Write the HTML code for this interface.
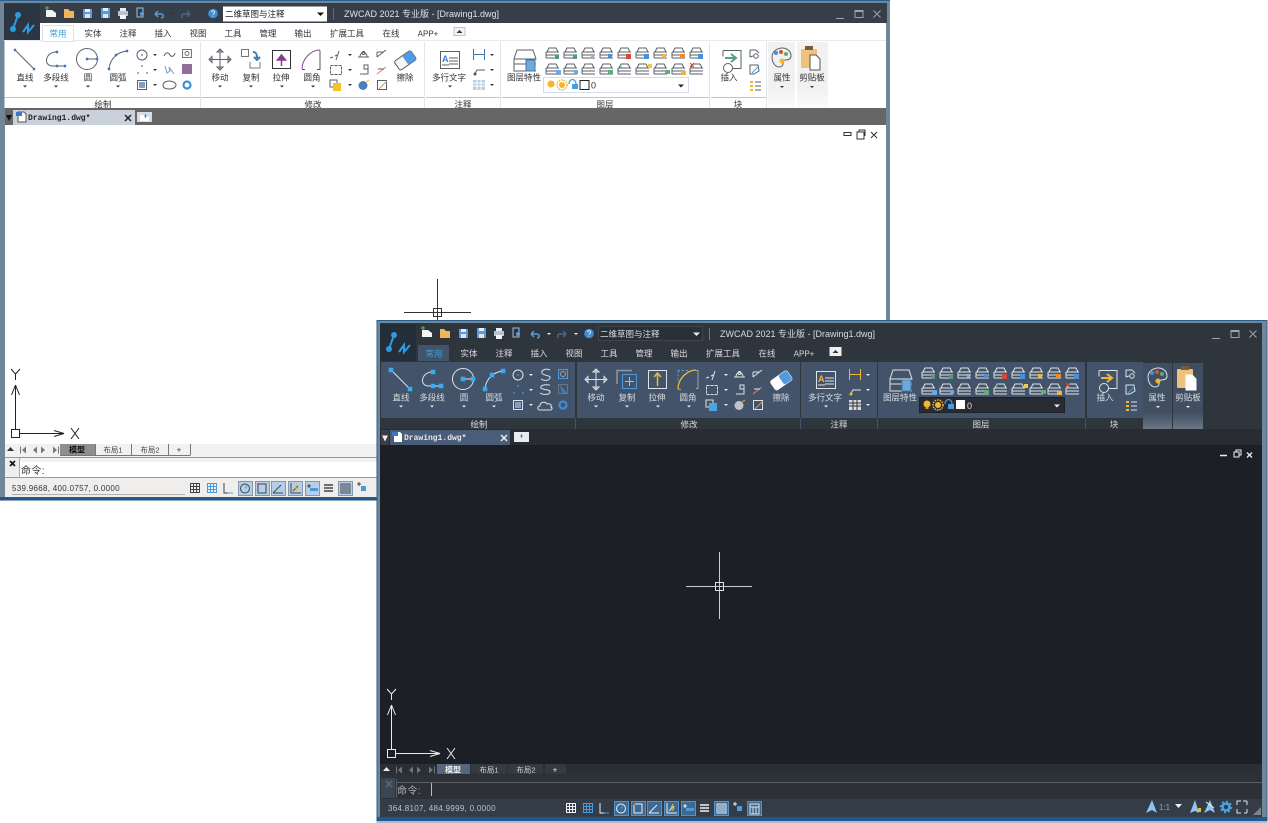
<!DOCTYPE html>
<html><head><meta charset="utf-8"><title>ZWCAD 2021</title>
<style>
html,body{margin:0;padding:0;background:#fff;width:1268px;height:823px;overflow:hidden}
svg{display:block;position:absolute;left:0;top:0}
text{font-family:"Liberation Sans","Noto Sans CJK SC",sans-serif;font-size:8.500px}
.c{text-anchor:middle}
.s{fill:none;stroke:var(--s);stroke-width:1}
.s2{fill:none;stroke:var(--s2);stroke-width:1}
.n{fill:none;stroke:var(--b);stroke-width:var(--n);stroke-linecap:square}
.t{fill:var(--t)}
.on{fill:var(--onf);stroke:var(--ons);stroke-width:1}
</style></head>
<body>
<svg width="1268" height="823" viewBox="0 0 1268 823" xmlns="http://www.w3.org/2000/svg">
<defs>
<g id="tri"><path class="t" d="M-2 0h4l-2 2z"/></g>
<g id="lay"><path class="s" d="M1 5l2-4h7l2 4M0 5h13M0 8h13M0 11h13M0 5v6"/></g>
<g id="qa">
 <path d="M18 15L13 29" stroke="#2f9ae0" stroke-width="2" fill="none"/>
 <circle cx="18" cy="15" r="3" fill="#2f9ae0"/><circle cx="13" cy="29" r="3" fill="#2f9ae0"/>
 <path d="M23 32l5-7v7l6-7" stroke="#2f9ae0" stroke-width="2" fill="none"/>
 <path d="M46 10h6l4 3v4H46z" fill="#f4f4f4"/><path d="M45 8h4M47 6v4" stroke="#5bb56a" stroke-width="1"/>
 <path d="M64 9h4l2 2h4v7H64z" fill="#f0b45a"/>
 <rect x="83" y="9" width="9" height="9" fill="#5c9bd8"/><rect x="85" y="9" width="5" height="3" fill="#e8eef5"/><rect x="85" y="14" width="5" height="4" fill="#dbe6f0"/>
 <rect x="101" y="8" width="9" height="10" fill="#5c9bd8"/><rect x="103" y="8" width="5" height="3" fill="#e8eef5"/><rect x="103" y="14" width="5" height="4" fill="#dbe6f0"/>
 <rect x="118" y="11" width="10" height="5" fill="#b7c4d2"/><rect x="120" y="8" width="6" height="3" fill="#e8eef5"/><rect x="120" y="15" width="6" height="4" fill="#f4f4f4"/>
 <path d="M137 8h6v9h-6z" fill="none" stroke="#9fc0dd"/><circle cx="142" cy="14" r="2" fill="#5c9bd8"/>
 <path d="M155 14l3-3M155 14l3 3M155 14h6c3 0 3 4 0 4" fill="none" stroke="#5c9bd8" stroke-width="1.500"/>
 <use href="#tri" x="173" y="13"/>
 <path d="M190 14l-3-3M190 14l-3 3M190 14h-6c-2 0-3 2-2 4" fill="none" stroke="#46688a" stroke-width="1.500"/>
 <use href="#tri" x="200" y="13"/>
 <circle cx="213" cy="13.500" r="4.800" fill="#3d8fd8"/><path d="M211.500 12c.5-2 3.500-1.500 3 .5-.3 1-1.500 1-1.500 2M213 15.800v.6" stroke="#fff" fill="none" stroke-width=".8"/>
 <path d="M836 18.500h8M855 10.500h8v7h-8zM855 11.500h8M873.500 10.500l7 7M880.500 10.500l-7 7" fill="none" stroke="#9ca5ad" stroke-width="1"/>
 <rect x="454" y="27.500" width="11" height="8" fill="var(--cb)" stroke="var(--cs)"/><path d="M456.500 33h6l-3-3z" fill="#333"/>
</g>
<g id="rib">
 <path class="s" d="M15 50L34 69"/><path class="n" d="M15 50h0M34 69h0"/>
 <path class="s" d="M57 52C46 51 42 66 53 66H64"/><path class="n" d="M57 52h0M57 66h0M65 66h0"/>
 <circle class="s" cx="87" cy="59" r="10.500"/><path class="s" d="M87 59h10"/><path class="n" d="M87 59h0M97 59h0"/>
 <path class="s" d="M109 69C110 58 118 52 127 51"/><path class="n" d="M109 69h0M116 55h0M127 51h0"/>
 <use href="#tri" x="25" y="85.500"/><use href="#tri" x="56" y="85.500"/><use href="#tri" x="88" y="85.500"/><use href="#tri" x="118" y="85.500"/>
 <use href="#tri" x="155" y="54"/><use href="#tri" x="155" y="69"/><use href="#tri" x="155" y="84"/>
 <circle class="s" cx="142" cy="55" r="5"/><path class="n" style="stroke-width:1.500" d="M142 55h0"/>
 <path class="n" style="stroke-width:1.500" d="M138 73h0M147 73h0M142 66h0"/>
 <rect class="s" x="137.500" y="80.500" width="9" height="9"/><rect x="139" y="82" width="6" height="6" fill="#7fa0c8"/>
 <circle cx="187" cy="85" r="3.500" fill="none" stroke="#3a8fd6" stroke-width="2.200"/>
 <path class="s" d="M209 59.500h22M220 49v21M220 49l-3 3h6zM220 70l-3-3h6zM209 59.500l3-3v6zM231 59.500l-3-3v6z"/>
 <use href="#tri" x="220" y="85.500"/><use href="#tri" x="251" y="85.500"/><use href="#tri" x="282" y="85.500"/><use href="#tri" x="313" y="85.500"/>
 <use href="#tri" x="350" y="54"/><use href="#tri" x="350" y="69"/><use href="#tri" x="350" y="84"/>
 <path class="s" d="M330 58l3-1M335 56l2-1M339 51l-3 9"/>
 <path class="s" d="M330.500 65.500h11v9h-11z" stroke-dasharray="3 1"/>
 <rect x="330" y="80" width="7" height="7" fill="none" stroke="var(--s)"/><rect x="333" y="83" width="8" height="8" fill="var(--cpy)"/>
 <path class="s" d="M358 57h11M360 57c0-6 7-6 7 0"/><circle class="s" cx="363.500" cy="53" r="1.500"/>
 <path class="s" d="M360 74h8v-9h-4v4h4"/>
 <circle cx="363" cy="85.500" r="4.500" fill="var(--bomb)"/><path d="M366 82l3-2" stroke="#f2b632"/>
 <path class="s" d="M377 57l9-7M377 52h6M377 52v5"/>
 <path d="M377 74l9-7" stroke="#e08060" fill="none"/><path class="s" d="M378 69h6"/>
 <rect class="s" x="377.500" y="80.500" width="9" height="9"/><path d="M379 89l8-8" stroke="#d8a23a" fill="none"/>
 <g transform="rotate(-35 405 60)"><rect x="395" y="55" width="20" height="11" rx="2" fill="var(--er1)" stroke="var(--er2)"/><rect x="405" y="55" width="10" height="11" rx="2" fill="#4f9ae0"/></g>
 <rect class="s" x="440.500" y="51.500" width="19" height="17"/><text x="442" y="62" style="font-size:9px;font-weight:bold;fill:var(--atx)">A</text><path class="s" d="M449 58h9M449 61h9M449 64h9M442 65h7"/>
 <use href="#tri" x="450" y="85.500"/>
 <path d="M473.500 49v11M484.500 49v11M474 54.500h10" fill="none" stroke="var(--dim)"/>
 <path class="s" d="M474 75l3-5h8"/><circle cx="475" cy="74" r="1.500" fill="var(--dim2)"/>
 <rect x="473" y="80" width="12" height="10" fill="var(--tab)"/><path d="M473 83h12M473 86h12M477 80v10M481 80v10" stroke="var(--tabl)" fill="none"/>
 <use href="#tri" x="492" y="54"/><use href="#tri" x="492" y="69"/><use href="#tri" x="492" y="84"/>
 <path class="s" d="M514 59l3-9h16l3 9zM514 59v5h22M514 64v7h22"/>
 <rect x="526" y="60" width="9" height="11" fill="#6fa9dc" stroke="#3f79ad"/>
 <use href="#lay" x="546" y="47"/><use href="#lay" x="564" y="47"/><use href="#lay" x="582" y="47"/><use href="#lay" x="600" y="47"/><use href="#lay" x="618" y="47"/><use href="#lay" x="636" y="47"/><use href="#lay" x="654" y="47"/><use href="#lay" x="672" y="47"/><use href="#lay" x="690" y="47"/>
 <use href="#lay" x="546" y="63"/><use href="#lay" x="564" y="63"/><use href="#lay" x="582" y="63"/><use href="#lay" x="600" y="63"/><use href="#lay" x="618" y="63"/><use href="#lay" x="636" y="63"/><use href="#lay" x="654" y="63"/><use href="#lay" x="672" y="63"/><use href="#lay" x="690" y="63"/>
 <rect x="555" y="55" width="4" height="4" fill="#4aa070"/><rect x="573" y="55" width="4" height="4" fill="#4aa070"/><rect x="591" y="54" width="3" height="4" fill="#aab"/><rect x="608" y="54" width="4" height="4" fill="#4a90d8"/><rect x="626" y="54" width="5" height="5" fill="#d24a3a"/><rect x="644" y="54" width="5" height="5" fill="#4a90d8"/><rect x="662" y="54" width="4" height="4" fill="#f2b632"/><rect x="680" y="54" width="5" height="4" fill="#f28a22"/><rect x="698" y="54" width="5" height="5" fill="#4a90d8"/>
 <rect x="556" y="70" width="5" height="5" fill="#6fa9dc"/><rect x="574" y="70" width="4" height="4" fill="#6fa9dc"/><rect x="608" y="70" width="5" height="4" fill="#5cb07a"/><path d="M622 64l-2 2 2 2" stroke="#5cb07a" fill="none"/><rect x="648" y="64" width="4" height="4" fill="#f2c84a"/><rect x="665" y="70" width="5" height="4" fill="#5cb07a"/><rect x="681" y="71" width="5" height="4" fill="#f2b632"/><path d="M690 63l4 4M694 63l-4 4" stroke="#d24a3a" fill="none"/>
 <path class="s" d="M723 50.500h18v18h-9M723 50.500v6"/><path d="M725 58h11M731 54l5 4-5 4" fill="none" stroke="var(--ins)" stroke-width="2"/>
 <circle class="s" cx="728" cy="68" r="4.500"/>
 <path class="s" d="M750 50h6l3 3M750 50v7M750 57l3-1"/><circle class="s" cx="756" cy="56" r="2.200"/>
 <path class="s" d="M750 65h8l1 6-5 3h-4z"/><path d="M752 73l7-7" stroke="#4a9bdc" fill="none"/>
 <path d="M750 82h3M750 86h3M750 90h3" stroke="#f2b632" fill="none" stroke-width="2"/><path class="s" d="M755 82h6M755 86h6M755 90h6"/>
 <path class="s" d="M772 57c0-6 6-9 10-9 6 0 9 4 9 8s-5 4-6 4-2 2-2 4-2 3-4 3c-4 0-7-5-7-10z"/>
 <circle cx="776" cy="53" r="2" fill="#4a8fd8"/><circle cx="781" cy="52" r="2" fill="#d8503a"/><circle cx="786" cy="54" r="2" fill="#5cae6a"/><circle cx="782" cy="61" r="2.500" fill="#f2b632"/>
 <use href="#tri" x="782" y="86"/><use href="#tri" x="812" y="86"/>
 <rect x="801" y="49" width="16" height="19" rx="1" fill="#f0c178"/><rect x="805" y="46" width="8" height="4" fill="#7b5a3a"/>
 <path d="M810 55h6l4 4v11h-10z" fill="var(--pg)" stroke="var(--pgs)"/>
</g>
<g id="stat">
 <rect class="on" x="238.500" y="481.500" width="14" height="14"/><rect class="on" x="255.500" y="481.500" width="14" height="14"/><rect class="on" x="271.500" y="481.500" width="14" height="14"/><rect class="on" x="288.500" y="481.500" width="14" height="14"/><rect class="on" x="305.500" y="481.500" width="14" height="14"/><rect class="on" x="338.500" y="481.500" width="14" height="14"/>
 <path class="s" style="stroke:var(--g)" d="M190.500 483.500h9v9h-9zM193.500 483.500v9M196.500 483.500v9M190.500 486.500h9M190.500 489.500h9"/>
 <path style="fill:none;stroke:#4a9bdc" d="M207.500 483.500h9v9h-9zM210.500 483.500v9M213.500 483.500v9M207.500 486.500h9M207.500 489.500h9"/>
 <path class="s" style="stroke:var(--g)" d="M224 483v10h9"/><path d="M228 493h5" stroke="#4a9bdc"/>
 <circle class="s" style="stroke:var(--g)" cx="245" cy="488.500" r="4.500"/><path d="M245 488.500l2-3" stroke="#4a9bdc"/>
 <rect class="s" style="stroke:var(--g)" x="258" y="484" width="8" height="9"/><rect x="257" y="483" width="2" height="2" fill="#d2503a"/>
 <path class="s" style="stroke:var(--g)" d="M273 493h10M273 493l8-8"/>
 <path class="s" style="stroke:var(--g)" d="M291 483v10h10M293 491l5-5"/><path d="M297 484l-2 4h3l-2 3" stroke="#f2b632" fill="none"/>
 <path class="s" style="stroke:var(--g)" d="M307 486h4M309 484v4"/><rect x="310" y="488" width="8" height="3" fill="#4a9bdc"/>
 <path d="M324 485h9M324 488h9M324 491h9" stroke="var(--g)" stroke-width="1.500" fill="none"/>
 <rect class="s" style="stroke:var(--g)" x="341" y="484" width="9" height="9"/><rect x="342" y="485" width="7" height="7" fill="var(--g)" opacity=".5"/>
 <path class="s" style="stroke:var(--g)" d="M357 484h4M359 482v4"/><rect x="361" y="486" width="5" height="5" fill="#4a9bdc"/>
</g>
<g id="ucs">
 <rect class="s" style="stroke:var(--u)" x="11.500" y="429.500" width="8" height="8"/>
 <path style="fill:none;stroke:var(--u)" d="M15.500 429V385M15.500 385l-4 10M15.500 385l4 10M19.500 433.500H64M64 433.500l-10-3M64 433.500l-10 3"/>
 <path style="fill:none;stroke:var(--u)" d="M11 369l4.500 5M20 369l-4.500 5v6M71 428l8 11M79 428l-8 11"/>
</g>
<g id="nav">
 <path class="t" d="M7 451l3.500-4 3.500 4z"/>
 <path style="fill:var(--nv);stroke:none" d="M20 446.500h1v7h-1zM26 446.500v7l-4-3.500zM37 446.500v7l-4-3.500zM41 446.500v7l4-3.500zM53 446.500v7l4-3.500zM58 446.500h1v7h-1z"/>
</g>
<linearGradient id="gr" x1="0" y1="0" x2="0" y2="1"><stop offset="0" stop-color="#3f4f62"/><stop offset=".75" stop-color="#414f60"/><stop offset="1" stop-color="#6b7686"/></linearGradient>
<linearGradient id="grl" x1="0" y1="0" x2="0" y2="1"><stop offset="0" stop-color="#f1f1f1"/><stop offset=".7" stop-color="#f1f1f1"/><stop offset="1" stop-color="#fbfbfb"/></linearGradient>
</defs>

<!-- WINDOW 1 -->
<g style="--s:#5a6068;--s2:#333;--b:#3e76b8;--n:2.400;--t:#333;--cb:#f4f4f4;--cs:#b8c4cc;--cpy:#f2c522;--bomb:#4a80bc;--er1:#f6f6f6;--er2:#555;--atx:#3b7fc9;--dim:#3d78b4;--dim2:#555;--tab:#b9cde6;--tabl:#fff;--ins:#55a086;--pg:#fff;--pgs:#555;--onf:#b6cfe9;--ons:#8098b0;--g:#444;--u:#222;--nv:#777">
 <rect x="0" y="0" width="890" height="501" fill="#6f8798"/>
 <rect x="0" y="0" width="890" height="1" fill="#2a5f8c"/>
 <rect x="0" y="497" width="890" height="4" fill="#24588a"/>
 <rect x="0" y="500" width="890" height="1" fill="#8fa3b2"/>
 <rect x="4" y="3" width="883" height="20" fill="#363f49"/>
 <rect x="4" y="4" width="36" height="37" fill="#2b3642"/>
 <rect x="40" y="23" width="846" height="18" fill="#fff"/>
 <rect x="4.500" y="41" width="881.500" height="67" fill="#fff"/>
 <rect x="42.500" y="25.500" width="31" height="16" fill="#fff" stroke="#dbe3ea"/>
 <path d="M4 40.500H42M74 40.500H886" stroke="#e6eaee"/>
 <rect x="768" y="42" width="27" height="66" fill="url(#grl)"/><rect x="797" y="42" width="31" height="66" fill="url(#grl)"/>
 <path d="M5 97.500H200M201 97.500H424M426 97.500H500M502 97.500H709M711 97.500H766" stroke="#a9c8e6"/>
 <path d="M200.500 42V108M424.500 42V108M500.500 42V108M709.500 42V108M766.500 42V108" stroke="#e2e6ea"/>
 <rect x="223" y="6.500" width="104" height="15" fill="#fff"/>
 <path d="M317 12.500h7l-3.500 3.500z" fill="#111"/>
 <path d="M333.500 8v12" stroke="#667"/>
 <use href="#qa"/>
 <use href="#rib"/>
 <!-- light-only small draw -->
 <path class="s" d="M164 56c2-5 5-3 6-1s4 2 5-2"/>
 <path d="M165 66l2 7 3-2-1-4 5 7" fill="none" stroke="#6d9cc8"/>
 <path class="s" d="M163 85c0-3 4-4 6-4s7 1 7 4-4 4-7 4-6-1-6-4z"/>
 <rect x="182.500" y="49.500" width="9" height="8" fill="none" stroke="#777"/><circle cx="187" cy="53.500" r="2" fill="none" stroke="#777"/>
 <rect x="182" y="64" width="10" height="10" fill="#8f6f9a"/>
 <rect x="543.500" y="77.500" width="145" height="15" fill="#fff" stroke="#d3deea"/>
 <circle cx="551" cy="84" r="3.500" fill="#f2b632"/><circle cx="562" cy="85" r="3" fill="#f2b632"/><circle cx="562" cy="85" r="5" fill="none" stroke="#f2b632" stroke-width="1.500" stroke-dasharray="1.500 1"/>
 <path d="M569 84c0-6 7-6 7 0" fill="none" stroke="#4a9bdc" stroke-width="1.300"/><rect x="572" y="84" width="6" height="5" fill="#4a9bdc"/>
 <rect x="580" y="80.500" width="9" height="9" fill="#fff" stroke="#222"/>
 <path d="M678 84.500h6l-3 3z" fill="#222"/>
 <g fill="#333">
 <text x="225" y="17" fill="#222">二维草图与注释</text>
 <text x="344" y="17" fill="#dfe3e6" style="font-size:9px">ZWCAD 2021 专业版 - [Drawing1.dwg]</text>
 <text class="c" x="58" y="36.500" fill="#3a9ad9">常用</text><text class="c" x="93" y="36.500">实体</text><text class="c" x="128" y="36.500">注释</text><text class="c" x="163" y="36.500">插入</text><text class="c" x="198" y="36.500">视图</text><text class="c" x="233" y="36.500">工具</text><text class="c" x="268" y="36.500">管理</text><text class="c" x="303" y="36.500">输出</text><text class="c" x="347" y="36.500">扩展工具</text><text class="c" x="391" y="36.500">在线</text><text class="c" x="428" y="36.500" style="font-size:8px">APP+</text>
 <text class="c" x="25" y="80.500">直线</text><text class="c" x="56" y="80.500">多段线</text><text class="c" x="88" y="80.500">圆</text><text class="c" x="118" y="80.500">圆弧</text>
 <text class="c" x="220" y="80.500">移动</text><text class="c" x="251" y="80.500">复制</text><text class="c" x="281" y="80.500">拉伸</text><text class="c" x="312" y="80.500">圆角</text><text class="c" x="405" y="80.500">擦除</text>
 <text class="c" x="449" y="80.500">多行文字</text><text class="c" x="524" y="80.500">图层特性</text><text class="c" x="729" y="80.500">插入</text><text class="c" x="782" y="80.500">属性</text><text class="c" x="812" y="80.500">剪贴板</text>
 <text class="c" x="103" y="107.500">绘制</text><text class="c" x="313" y="107.500">修改</text><text class="c" x="463" y="107.500">注释</text><text class="c" x="605" y="107.500">图层</text><text class="c" x="738" y="107.500">块</text>
 <text x="591" y="88.500" style="font-size:9px">0</text>
 </g>
 <rect x="241.500" y="49.500" width="7" height="7" fill="none" stroke="#777"/><path d="M253 52c3 0 4 2 4 6M254 57l3 3 3-3" fill="none" stroke="#3d78b4" stroke-width="2"/><path d="M250 62v6h10v-6" fill="none" stroke="#8a6a9a"/>
 <rect x="272.500" y="50.500" width="18" height="18" fill="none" stroke="#333"/><path d="M281.500 66v-9M277.500 60l4-5 4 5z" fill="#8a3a8a" stroke="#8a3a8a" stroke-width="1.500"/>
 <path d="M302 69c0-10 9-19 18-19" fill="none" stroke="#8a4a9a"/><path d="M320 50.500v19h-3M302 69.500h3" fill="none" stroke="#555"/>
 <rect x="5" y="108" width="881" height="17" fill="#666"/>
 <rect x="13" y="110" width="122" height="15" fill="#c9d2da"/>
 <path d="M6 115h6l-3 6z" fill="#111"/>
 <path d="M18 112h6l2 2v8h-8z" fill="#fff" stroke="#555"/><rect x="16" y="112" width="6" height="4" fill="#3d78c4"/>
 <text x="28" y="120" style="font-family:'Liberation Mono',monospace;font-size:8px;font-weight:bold" fill="#222">Drawing1.dwg*</text>
 <path d="M125 115l6 6M131 115l-6 6" stroke="#222" stroke-width="1.500"/>
 <rect x="137" y="112" width="15" height="10" fill="#d8dce0"/><path d="M140 115h6l3 2v4h-9z" fill="#fff"/><path d="M144 116h3M145.500 114v4" stroke="#3d9bdc"/>
 <rect x="5" y="125" width="881" height="319" fill="#fff"/>
 <rect x="844" y="132.500" width="7" height="3" fill="none" stroke="#333"/><path d="M857 132h7v7h-7zM859 132v-2h6v6" stroke="#333" fill="none"/>
 <path d="M871 132l6 6M877 132l-6 6" stroke="#333"/>
 <path d="M404 312.500H471M437.500 279V345" stroke="#333"/><rect x="433.500" y="308.500" width="8" height="8" fill="none" stroke="#333"/>
 <use href="#ucs"/>
 <rect x="5" y="444" width="881" height="13" fill="#f1f1f1"/>
 <use href="#nav"/>
 <rect x="60" y="444" width="35" height="11" fill="#8f8f8f"/>
 <path d="M95.500 444v11M131.500 444v11M168.500 444v11M190.500 444v11M60 455.500H190.500" stroke="#777" fill="none"/>
 <text class="c" x="77" y="452.500" style="font-size:8px;font-weight:bold" fill="#111">模型</text><text class="c" x="113" y="452.500" style="font-size:7.500px" fill="#444">布局1</text><text class="c" x="150" y="452.500" style="font-size:7.500px" fill="#444">布局2</text><text class="c" x="179" y="452.500" style="font-size:8px" fill="#333">+</text>
 <rect x="5" y="457" width="881" height="21" fill="#fff"/>
 <rect x="5" y="457" width="881" height="5" fill="#f2f2f2"/>
 <path d="M5 457.500H886M5 477.500H886" stroke="#999"/>
 <rect x="5" y="458" width="14" height="19" fill="#eee"/><path d="M19.500 458v19" stroke="#aaa"/>
 <path d="M10 461l5 5M15 461l-5 5" stroke="#111" stroke-width="1.600"/>
 <text x="21" y="474" style="font-size:10px;letter-spacing:.4px" fill="#333">命令:</text>
 <rect x="5" y="478" width="881" height="19" fill="#f0eeec"/>
 <path d="M12 494.500H185" stroke="#b0b0b0"/>
 <text x="12" y="491" style="font-size:8px;letter-spacing:.3px" fill="#333">539.9668, 400.0757, 0.0000</text>
 <use href="#stat"/>
</g>

<!-- WINDOW 2 -->
<g transform="translate(376,320)" style="--s:#dfe3e7;--s2:#ccc;--b:#33aef0;--n:4.500;--t:#eee;--cb:#f0f0f0;--cs:#eee;--cpy:#4aa5e8;--bomb:#c0c4c8;--er1:#fff;--er2:#fff;--atx:#f2b632;--dim:#f2b632;--dim2:#f2b632;--tab:#d8dce0;--tabl:#333;--ins:#f2b632;--pg:#fff;--pgs:#fff;--onf:#3d6a92;--ons:#4f93cf;--g:#eef0f2;--u:#e8eaec;--nv:#6d7681">
 <rect x="0.500" y="0" width="891" height="503" fill="#6f8798"/>
 <rect x="0.500" y="0" width="891" height="1" fill="#2a5f8c"/>
 <rect x="0.500" y="0" width="1" height="503" fill="#2a5f8c"/>
 <rect x="890.500" y="0" width="1" height="503" fill="#2a5f8c"/>
 <rect x="0.500" y="497" width="891" height="4" fill="#24588a"/>
 <rect x="0.500" y="501" width="891" height="2" fill="#a8bccb"/>
 <rect x="4" y="3" width="882" height="38" fill="#2f353c"/>
 <rect x="4" y="4" width="36" height="37" fill="#242e39"/>
 <rect x="42" y="25" width="31" height="16" fill="#43546a"/>
 <rect x="4" y="41" width="882" height="68" fill="#2f353c"/>
 <rect x="5" y="42" width="194" height="56" fill="#43546a"/><rect x="201" y="42" width="223" height="56" fill="#43546a"/><rect x="425" y="42" width="76" height="56" fill="#43546a"/><rect x="502" y="42" width="207" height="56" fill="#43546a"/><rect x="711" y="42" width="56" height="56" fill="#43546a"/>
 <path d="M199.500 98V109M424.500 98V109M501.500 98V109M709.500 98V109" stroke="#43546a"/>
 <rect x="767" y="43" width="29" height="66" fill="url(#gr)"/><rect x="797" y="43" width="30" height="66" fill="url(#gr)"/>
 <rect x="222.500" y="6.500" width="104" height="14" fill="#2a2f36" stroke="#3d454e"/>
 <path d="M317 12.500h7l-3.500 3.500z" fill="#eee"/>
 <path d="M333.500 8v12" stroke="#777"/>
 <use href="#qa"/>
 <use href="#rib"/>
 <!-- dark-only small draw -->
 <path d="M174 50c-4-2-9 0-8 3s9 2 8 5-6 3-9 1" fill="none" stroke="#dfe3e7" transform="translate(0,0)"/>
 <path d="M174 65c-7-1-10 1-9 3s9 1 9 4-7 3-10 1" fill="none" stroke="#dfe3e7"/>
 <path d="M164 90c-3 0-3-4 0-4 0-4 5-5 7-2 3-1 5 1 4 3 2 1 1 3-1 3z" fill="none" stroke="#dfe3e7"/>
 <rect x="182.500" y="49.500" width="9" height="9" fill="none" stroke="#4a9bdc"/><circle cx="187" cy="54" r="2.500" fill="none" stroke="#9aa2ab"/>
 <rect x="182.500" y="64.500" width="9" height="9" fill="none" stroke="#8f98a2" stroke-dasharray="1 1"/><path d="M184 65l7 8h-5z" fill="#4a7ba8"/>
 <rect x="543.500" y="77.500" width="145" height="15" fill="#282c32" stroke="#1e2226"/>
 <circle cx="551" cy="84" r="3.500" fill="#f2b632"/><rect x="549.500" y="87" width="3" height="2" fill="#d89a22"/><circle cx="562" cy="85" r="3" fill="#f2b632"/><circle cx="562" cy="85" r="5" fill="none" stroke="#f2b632" stroke-width="1.500" stroke-dasharray="1.500 1"/>
 <path d="M569 84c0-6 7-6 7 0" fill="none" stroke="#4a9bdc" stroke-width="1.300"/><rect x="572" y="84" width="6" height="5" fill="#4a9bdc"/>
 <rect x="580" y="80" width="9" height="9" fill="#fff"/>
 <path d="M678 84.500h6l-3 3z" fill="#eee"/>
 <g fill="#d8dce0">
 <text x="224" y="17">二维草图与注释</text>
 <text x="344" y="17" style="font-size:9px">ZWCAD 2021 专业版 - [Drawing1.dwg]</text>
 <text class="c" x="58" y="36.500" fill="#2f9fe0">常用</text><text class="c" x="93" y="36.500">实体</text><text class="c" x="128" y="36.500">注释</text><text class="c" x="163" y="36.500">插入</text><text class="c" x="198" y="36.500">视图</text><text class="c" x="233" y="36.500">工具</text><text class="c" x="268" y="36.500">管理</text><text class="c" x="303" y="36.500">输出</text><text class="c" x="347" y="36.500">扩展工具</text><text class="c" x="391" y="36.500">在线</text><text class="c" x="428" y="36.500" style="font-size:8px">APP+</text>
 <text class="c" x="25" y="80.500">直线</text><text class="c" x="56" y="80.500">多段线</text><text class="c" x="88" y="80.500">圆</text><text class="c" x="118" y="80.500">圆弧</text>
 <text class="c" x="220" y="80.500">移动</text><text class="c" x="251" y="80.500">复制</text><text class="c" x="281" y="80.500">拉伸</text><text class="c" x="312" y="80.500">圆角</text><text class="c" x="405" y="80.500">擦除</text>
 <text class="c" x="449" y="80.500">多行文字</text><text class="c" x="524" y="80.500">图层特性</text><text class="c" x="729" y="80.500">插入</text><text class="c" x="781" y="80.500">属性</text><text class="c" x="812" y="80.500">剪贴板</text>
 <text class="c" x="103" y="107.500">绘制</text><text class="c" x="313" y="107.500">修改</text><text class="c" x="463" y="107.500">注释</text><text class="c" x="605" y="107.500">图层</text><text class="c" x="738" y="107.500">块</text>
 <text x="591" y="89" style="font-size:9px">0</text>
 </g>
 <path d="M241 64V50.500h15" fill="none" stroke="#8f98a2" stroke-width="1.500"/><rect x="246.500" y="54.500" width="14" height="14" fill="none" stroke="#4a9bdc"/><path d="M249 61.500h9M253.500 57v9" stroke="#f2b632"/>
 <rect x="272.500" y="50.500" width="18" height="18" fill="none" stroke="#dfe3e7"/><path d="M281.500 66V54M278 57l3.500-4 3.500 4" fill="none" stroke="#f2b632" stroke-width="1.500"/>
 <path d="M302 69c0-10 9-19 18-19" fill="none" stroke="#f2b632" stroke-width="1.300"/><path d="M320 50.500h2v18h-2M302 69.500h3" fill="none" stroke="#9aa2ab"/><path d="M302 50.500h12M302 50.500v12" fill="none" stroke="#6aa2d2" stroke-dasharray="2 2"/>
 <rect x="4" y="109" width="882" height="16" fill="#292d33"/>
 <rect x="14" y="110" width="120" height="15" fill="#4a5d78"/>
 <rect x="5" y="110" width="8" height="15" fill="#3a3f46"/>
 <path d="M6 115.500h6l-3 6z" fill="#eee"/>
 <path d="M18 112h6l2 2v8h-8z" fill="#fff"/><rect x="16" y="112" width="6" height="4" fill="#3d78c4"/>
 <text x="28" y="120" style="font-family:'Liberation Mono',monospace;font-size:8px;font-weight:bold" fill="#e4e8ec">Drawing1.dwg*</text>
 <path d="M125 115l6 6M131 115l-6 6" stroke="#eee" stroke-width="1.500"/>
 <rect x="138" y="112" width="15" height="10" fill="#e8ecf0"/><path d="M144 116h3M145.500 114v4" stroke="#3d9bdc"/>
 <rect x="4" y="125" width="882" height="319" fill="#1c2026"/>
 <path d="M844 135.500h7" stroke="#eee" stroke-width="1.500"/><path d="M858 132h5v5h-5zM860 132v-2h5v5h-2" stroke="#eee" fill="none"/>
 <path d="M871 132.500l5 5M876 132.500l-5 5" stroke="#eee" stroke-width="1.300"/>
 <use href="#ucs"/>
 <rect x="4" y="444" width="882" height="13" fill="#2a2f36"/>
 <rect x="4" y="455" width="882" height="2" fill="#2e3339"/>
 <use href="#nav"/>
 <rect x="61" y="444" width="33" height="10" fill="#54677f"/>
 <rect x="95" y="444" width="36" height="10" fill="#343a42"/><rect x="132" y="444" width="35" height="10" fill="#343a42"/><rect x="169" y="444" width="21" height="10" fill="#343a42"/>
 <text class="c" x="77" y="452.500" style="font-size:8px;font-weight:bold" fill="#eee">模型</text><text class="c" x="113" y="452.500" style="font-size:7.500px" fill="#cfd4d9">布局1</text><text class="c" x="150" y="452.500" style="font-size:7.500px" fill="#cfd4d9">布局2</text><text class="c" x="179" y="452.500" style="font-size:8px" fill="#eee">+</text>
 <rect x="4" y="457" width="882" height="22" fill="#2d3137"/>
 <path d="M21 462.500H886" stroke="#5a6066"/>
 <rect x="5" y="458" width="14" height="20" fill="#3b4653"/><path d="M20.500 459v19" stroke="#555b62"/>
 <path d="M10 461l6 6M16 461l-6 6" stroke="#5a6672" stroke-width="1.600"/>
 <text x="21" y="474" style="font-size:10px;letter-spacing:.4px" fill="#a9afb5">命令:</text>
 <path d="M55.500 463v13" stroke="#bbb"/>
 <rect x="4" y="479" width="882" height="18" fill="#343c47"/>
 <text x="12" y="491" style="font-size:8px;letter-spacing:.3px" fill="#bcc2c8">364.8107, 484.9999, 0.0000</text>
 <use href="#stat"/>
 <rect class="on" x="371.500" y="481.500" width="14" height="14"/>
 <path d="M374 484h9v10h-9zM374 487h9M377 487v7M380 487v7" stroke="#dfe3e7" fill="none"/>
</g>
<path d="M686 586.500H752M719.500 552V619" stroke="#c8ccd0"/><rect x="715.500" y="582.500" width="8" height="8" fill="none" stroke="#dfe3e7"/>
<path d="M1152 800l5 13-5-3-6 3z" fill="#8fc4ee"/>
<text x="1159" y="810" style="font-size:8px" fill="#99a0a7">1:1</text>
<path d="M1175 804h7l-3.500 4z" fill="#eee"/>
<path d="M1195 800l4 13-4-2-5 2z" fill="#8fc4ee"/><rect x="1198" y="808" width="3" height="4" fill="#f2b632"/>
<path d="M1210 800l5 13-5-3-6 3z" fill="#8fc4ee"/><path d="M1206 802l8 6" stroke="#eee"/>
<circle cx="1226" cy="807" r="3.500" fill="none" stroke="#4aa5e8" stroke-width="2.500"/><circle cx="1226" cy="807" r="5.500" fill="none" stroke="#4aa5e8" stroke-width="1.500" stroke-dasharray="2 2.300"/>
<path d="M1237 805v-4h4M1247 801h-4M1247 801v4M1237 809v4h4M1247 813h-3M1247 813v-4" stroke="#dfe3e7" fill="none"/>
<path d="M1253 815l8-8v8z" fill="#9aa3ab" opacity=".7"/>
</svg>
</body></html>
